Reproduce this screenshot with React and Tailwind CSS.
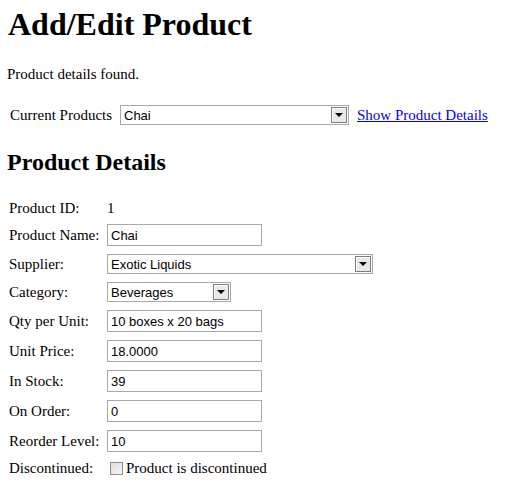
const FIELDS = [
  { label: "Product Name:", value: "Chai", type: "text" },
  { label: "Supplier:", value: "Exotic Liquids", type: "select", width: "w-[266px]" },
  { label: "Category:", value: "Beverages", type: "select", width: "w-[124px]" },
  { label: "Qty per Unit:", value: "10 boxes x 20 bags", type: "text" },
  { label: "Unit Price:", value: "18.0000", type: "text" },
  { label: "In Stock:", value: "39", type: "text" },
  { label: "On Order:", value: "0", type: "text" },
  { label: "Reorder Level:", value: "10", type: "text" },
];

function TextBox({ value }) {
  return (
    <div className="flex h-[22px] w-[155px] items-center border border-[#a9a9a9] bg-white pl-[3px] font-['Liberation_Sans',Arial,sans-serif] text-[13px] leading-none text-black">
      {value}
    </div>
  );
}

function DropDown({ value, width }) {
  return (
    <div
      className={`flex h-[20px] ${width} items-stretch border border-[#a9a9a9] bg-white font-['Liberation_Sans',Arial,sans-serif] text-[13px] leading-none text-black`}
    >
      <div className="flex flex-1 items-center pl-[3px]">{value}</div>
      <div className="m-px flex w-[16px] items-center justify-center border border-[#7d7d7d] bg-[#e9e9e9] shadow-[inset_1px_1px_0_#ffffff]">
        <div className="h-0 w-0 border-x-[4px] border-t-[4px] border-x-transparent border-t-black" />
      </div>
    </div>
  );
}

export default function App() {
  return (
    <div className="h-[496px] w-[510px] overflow-hidden bg-white font-['Liberation_Serif','Times_New_Roman',serif] text-black">
      <h1 className="pl-[8px] pt-[6px] text-[32px] font-bold leading-[36px]">Add/Edit Product</h1>

      <p className="mt-[23px] pl-[7px] text-[15px] leading-[18px]">Product details found.</p>

      <div className="mt-[22px] flex h-[20px] items-center pl-[10px] text-[15px] leading-[17px]">
        <span className="w-[110px]">Current Products</span>
        <DropDown value="Chai" width="w-[229px]" />
        <a href="#" className="ml-[8px] text-[#0000ff] underline">
          Show Product Details
        </a>
      </div>

      <h2 className="mt-[23px] pl-[7px] text-[24px] font-bold leading-[28px]">Product Details</h2>

      <div className="mt-[20px] flex flex-col gap-[8px] pl-[9px] text-[15px]">
        <div className="flex h-[20px] items-end leading-[16px]">
          <span className="w-[98px]">Product ID:</span>
          <span>1</span>
        </div>
        {FIELDS.map((f) => (
          <div key={f.label} className="flex items-center leading-[17px]">
            <span className="w-[98px]">{f.label}</span>
            {f.type === "text" ? (
              <TextBox value={f.value} />
            ) : (
              <DropDown value={f.value} width={f.width} />
            )}
          </div>
        ))}
        <div className="flex h-[17px] items-center leading-[17px]">
          <span className="w-[98px]">Discontinued:</span>
          <span className="ml-[3px] h-[13px] w-[13px] border border-[#8e8f8f] bg-gradient-to-br from-[#dcdcdc] to-[#f6f6f6]" />
          <span className="ml-[3px]">Product is discontinued</span>
        </div>
      </div>
    </div>
  );
}
